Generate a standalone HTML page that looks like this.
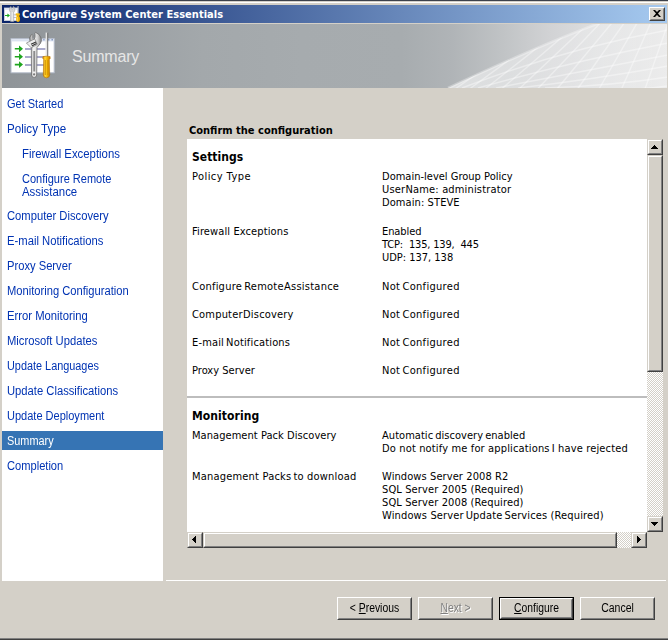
<!DOCTYPE html>
<html><head><meta charset="utf-8"><title>Configure System Center Essentials</title>
<style>
html,body{margin:0;padding:0;}
body{width:668px;height:640px;overflow:hidden;background:#d4d0c8;position:relative;font-family:"DejaVu Sans Condensed","DejaVu Sans","Liberation Sans",sans-serif;font-size:11px;color:#000;}
.abs{position:absolute;}
#topdark{left:0;top:0;width:668px;height:1px;background:#3c414b;}
#toplite{left:0;top:1px;width:668px;height:1px;background:#d4d0c8;}
#topwhite{left:0;top:2px;width:668px;height:1px;background:#fff;}
#leftlite{display:none;}
#botgray{left:0;top:638px;width:668px;height:1px;background:#808080;}
#botdark{left:0;top:639px;width:668px;height:1px;background:#404040;}
#titlebar{left:2px;top:5px;width:665px;height:18px;background:linear-gradient(to right,#0a246a 0%,#a6caf0 100%);}
#title{left:22px;top:8px;letter-spacing:.04px;height:13px;line-height:13px;font-weight:bold;font-size:11px;color:#fff;white-space:nowrap;}
#closebtn{left:649px;top:7px;width:16px;height:14px;background:#d4d0c8;box-sizing:border-box;border:1px solid;border-color:#fff #404040 #404040 #fff;}
#closebtn:before{content:"";position:absolute;left:0;top:0;right:0;bottom:0;border:1px solid;border-color:#d4d0c8 #808080 #808080 #d4d0c8;}
#banner{left:2px;top:24px;width:665px;height:64px;background:linear-gradient(to right,#8f9498 0px,#999ea2 100px,#a3a8ab 200px,#a6abae 300px,#a7acaf 400px,#b0b4b7 450px,#c0c3c5 500px,#d2d3d5 550px,#dfe0e1 600px,#e9e9e9 666px);overflow:hidden;}
#heading{left:72px;top:47px;letter-spacing:-.2px;font-family:"Liberation Sans",sans-serif;font-size:16px;line-height:20px;color:#e6e6e6;white-space:nowrap;}
#sidebar{left:2px;top:88px;width:161px;height:493px;background:#fff;}
.nav{position:absolute;left:5px;font-family:"Liberation Sans",sans-serif;font-size:12px;line-height:13px;color:#0033b3;white-space:nowrap;transform:scaleX(.92);transform-origin:0 0;}
.nav.sub{left:20px;}
#sel{left:0;top:343px;width:161px;height:19px;background:#3674b4;}
.nav.on{color:#fff;}
#sepline{left:166px;top:580px;width:500px;height:1px;background:#fff;}
#confirm{left:189px;top:124px;line-height:13px;font-weight:bold;white-space:nowrap;}
#panel{left:187px;top:139px;width:460px;height:393px;background:#fff;overflow:hidden;}
.h{position:absolute;left:5px;font-weight:bold;font-size:12px;line-height:15px;white-space:nowrap;}
.l{position:absolute;left:5px;line-height:13px;white-space:nowrap;}
.v{position:absolute;left:195px;line-height:13px;white-space:nowrap;}
.s0{word-spacing:-3px}.s1{word-spacing:-2px}.s2{word-spacing:-1.2px}
#rule{left:0;top:257px;width:460px;height:2px;background:#bdbdbd;}
.sbbtn{position:absolute;width:16px;height:16px;background:#d4d0c8;box-sizing:border-box;border:1px solid;border-color:#d4d0c8 #404040 #404040 #d4d0c8;}
.sbbtn:before{content:"";position:absolute;left:0;top:0;right:0;bottom:0;border:1px solid;border-color:#fff #808080 #808080 #fff;}
.track{position:absolute;background-color:#fff;background-image:conic-gradient(#d4d0c8 25%,#fff 0 50%,#d4d0c8 0 75%,#fff 0);background-size:2px 2px;}
.btn{position:absolute;top:597px;width:75px;height:23px;box-sizing:border-box;background:#d4d0c8;border:1px solid;border-color:#fff #404040 #404040 #fff;font-family:"Liberation Sans",sans-serif;font-size:12px;line-height:13px;text-align:center;color:#000;}
.btn:before{content:"";position:absolute;left:0;top:0;right:0;bottom:0;border:1px solid;border-color:#d4d0c8 #808080 #808080 #d4d0c8;}
.btn span{position:absolute;left:0;right:0;top:4px;display:block;transform:scaleX(.92);transform-origin:50% 0;white-space:nowrap;}
.btn.dis span{color:#808080;text-shadow:1px 1px 0 #fff;}
.btn.def{border-color:#000;}
.btn.def:before{border-color:#fff #404040 #404040 #fff;}
.btn.def:after{content:"";position:absolute;left:1px;top:1px;right:1px;bottom:1px;border:1px solid;border-color:#d4d0c8 #808080 #808080 #d4d0c8;}
u{text-decoration:underline;text-underline-offset:1px;}
</style></head>
<body>
<div class="abs" id="topdark"></div><div class="abs" id="toplite"></div><div class="abs" id="topwhite"></div><div class="abs" id="leftlite"></div>
<div class="abs" id="botgray"></div><div class="abs" id="botdark"></div>

<div class="abs" id="titlebar"></div>
<svg class="abs" id="ticon" style="left:4px;top:6px" width="16" height="16" viewBox="0 0 16 16">
 <rect x=".4" y="2" width="13.300" height="12.600" fill="#fff" stroke="#d3d8e2" stroke-width=".8"/>
 <rect x=".8" y="2.400" width="12.500" height="1.300" fill="#d9e2f3"/>
 <path d="M7.500 8.800h4.500M7.500 11.500h4.500" stroke="#b9bbdc" stroke-width="1"/>
 <path d="M1 8.900H3.400V7.400L6 9.500 3.400 11.600V10.100H1z" fill="#1caa1c"/>
 <path d="M6.600 15.600 L6.700 6.400 Q5 5 5.600 2.600 Q5.900 1 7 .4 L7.300 2.700 L8.200 3.500 L9.100 2.700 L9.400 .2 Q10.600 1 10.800 2.600 Q11.200 5 9.700 6.400 L9.800 15.600 Z" fill="#d4d4d4" stroke="#9c9c9c" stroke-width=".5"/>
 <rect x="7.700" y="6" width="1" height="9.200" fill="#f4f4f4"/>
 <rect x="13.600" y="0" width=".9" height="7.600" fill="#dcdcdc"/>
 <path d="M11.700 7.400H15.900V9.400H15V10.300Q15.900 10.600 15.900 11.800V14.300Q15.700 15.900 14 15.900Q12.300 15.900 12.200 14.300V11.800Q12.200 10.600 12.700 10.300V9.400H11.700z" fill="#f2b300"/>
 <path d="M12.300 7.900H15.300" stroke="#ffd84a" stroke-width=".8"/>
 <path d="M13.400 11V15" stroke="#ffd84a" stroke-width=".9"/>
</svg>
<div class="abs" id="title">Configure System Center Essentials</div>
<div class="abs" id="closebtn"><svg class="abs" style="left:3px;top:2px" width="8" height="7" viewBox="0 0 8 7"><path d="M0 0h2l2 2 2-2h2L5 3.500 8 7H6L4 5 2 7H0L3 3.500z" fill="#000"/></svg></div>

<div class="abs" id="banner">
<svg class="abs" style="left:0;top:0" width="666" height="64" viewBox="2 24 666 64">
 <defs>
  <linearGradient id="surf" gradientUnits="userSpaceOnUse" x1="448" y1="0" x2="668" y2="0"><stop offset="0" stop-color="#fff" stop-opacity=".6"/><stop offset=".5" stop-color="#fff" stop-opacity=".3"/><stop offset="1" stop-color="#fff" stop-opacity=".12"/></linearGradient>
  <filter id="soft" x="-5%" y="-5%" width="110%" height="110%"><feGaussianBlur stdDeviation=".45"/></filter>
  <clipPath id="surfclip"><path d="M448,88 Q540,45 602,22 L668,22 L668,90 L448,90 Z"/></clipPath>
 </defs>
 <path d="M448,88 Q540,45 602,22 L668,22 L668,90 L448,90 Z" fill="url(#surf)"/>
<g fill="none" stroke="#fff" stroke-width="1.4" stroke-opacity=".38" clip-path="url(#surfclip)" filter="url(#soft)">
<path d="M462,88 Q560,50 668,30"/>
<path d="M478,88 Q570,62 668,43"/>
<path d="M496,88 Q580,72 668,55"/>
<path d="M518,88 Q590,80 668,66"/>
<path d="M545,88 Q610,86 668,77"/>
<path d="M600,90 Q640,90 668,86"/>
<path d="M455.0,89 L556.5,19"/>
<path d="M469.5,89 L564.8,19"/>
<path d="M485.0,89 L573.8,19"/>
<path d="M501.5,89 L583.3,19"/>
<path d="M519.0,89 L593.3,19"/>
<path d="M537.5,89 L604.0,19"/>
<path d="M557.0,89 L615.2,19"/>
<path d="M577.5,89 L627.0,19"/>
<path d="M599.0,89 L639.4,19"/>
<path d="M621.5,89 L652.4,19"/>
<path d="M645.0,89 L669.5,19"/>
<path d="M669.5,89 L694.0,19"/>
</g>
<path d="M448,88 Q540,45 602,22" fill="none" stroke="#fff" stroke-opacity=".3" stroke-width="2.5" filter="url(#soft)"/>

</svg>
<svg class="abs" id="bigicon" style="left:2px;top:2px" width="60" height="60" viewBox="0 0 60 60">
 <defs>
  <linearGradient id="wr" x1="0" y1="0" x2="1" y2="0"><stop offset="0" stop-color="#8e8e8e"/><stop offset=".35" stop-color="#f6f6f6"/><stop offset=".7" stop-color="#cfcfcf"/><stop offset="1" stop-color="#7c7c7c"/></linearGradient>
  <linearGradient id="hd" x1="0" y1="0" x2="1" y2="0"><stop offset="0" stop-color="#d88a00"/><stop offset=".3" stop-color="#ffd83a"/><stop offset=".6" stop-color="#f4b400"/><stop offset="1" stop-color="#c87c00"/></linearGradient>
 </defs>
 <rect x="6.600" y="12.400" width="44" height="36" fill="#8a9096" opacity=".45"/>
 <rect x="7" y="12.600" width="43.200" height="34.200" fill="#fff" stroke="#b4bccb" stroke-width="1"/>
 <rect x="7.500" y="13.100" width="42.200" height="2.300" fill="#dbe2f0"/>
 <rect x="39.300" y="13.300" width="1.200" height="1" fill="#5570a8"/><rect x="44.200" y="13.300" width="1.200" height="1" fill="#5570a8"/><rect x="47.500" y="13.300" width="1.400" height="1" fill="#5570a8"/>
 <g stroke="#8e8ebc" stroke-width="1.700"><path d="M21 23H41.500M21 31H41.500M21 39H41.500"/></g>
 <g fill="#1fa51f"><path d="M10.800 22H15V19.400L19 22.800 15 26.200V23.600H10.800z"/><path d="M10.800 29.900H15V27.300L19 30.700 15 34.100V31.500H10.800z"/><path d="M10.800 37.800H15V35.200L19 38.600 15 42V39.400H10.800z"/></g>
 <!-- wrench -->
 <path d="M27.300 21.500 L27.500 49 Q27.700 51.400 30.100 51.400 Q32.500 51.400 32.700 49 L33 21.500 L36.400 17.400 Q38 14.600 37.200 12.200 Q35.800 7.800 31.600 6.400 Q30.400 6.600 31 8.600 Q31.400 11 30.200 13.400 L29.300 14 Q28.400 12 28.800 9 Q28.600 7.800 27.200 8.800 Q24.600 11.600 26 15 L27.300 17 Z" fill="url(#wr)" stroke="#6e6e6e" stroke-width=".8" stroke-linejoin="round"/>
 <path d="M22.400 17 L30.600 12.900 L33.300 18.400 L27.200 21.800 Z" fill="#ededed" stroke="#7a7a7a" stroke-width=".7" stroke-linejoin="round"/>
 <path d="M27 18.300 L32 15.900 M27.800 20 L32.600 17.600" stroke="#333" stroke-width="1.100" fill="none"/>
 <rect x="29.300" y="25" width="1.900" height="20.500" fill="#8c8c8c"/>
 <circle cx="30.100" cy="48.400" r="1.100" fill="#7a7a7a"/>
 <!-- screwdriver -->
 <rect x="41.600" y="6.600" width="2.200" height="24" fill="#e4e4e4"/>
 <rect x="43.300" y="6.600" width=".9" height="24" fill="#5c5c5c"/>
 <path d="M38.900 30.600 Q42.500 29.800 46.100 30.600 L46.100 32.800 L45.300 33.600 L45.700 49 Q45.500 51.700 42.500 51.800 Q39.500 51.700 39.300 49 L39.700 33.600 L38.900 32.800 Z" fill="url(#hd)" stroke="#b87400" stroke-width=".6"/>
 <path d="M41.300 34V49M43.900 34V49" stroke="#c88600" stroke-width=".8" fill="none"/>
</svg>
</div>
<div class="abs" id="heading">Summary</div>

<div class="abs" id="sidebar">
 <div class="abs" id="sel"></div>
 <div class="nav" id="n0" style="top:10px;transform:scaleX(0.9166)">Get Started</div>
 <div class="nav" id="n1" style="top:35px;transform:scaleX(0.9665)">Policy Type</div>
 <div class="nav sub" id="n2" style="top:60px;transform:scaleX(0.9472)">Firewall Exceptions</div>
 <div class="nav sub" id="n3" style="top:85px;transform:scaleX(0.9180)">Configure Remote</div>
 <div class="nav sub" id="n4" style="top:98px;transform:scaleX(0.9516)">Assistance</div>
 <div class="nav" id="n5" style="top:122px;transform:scaleX(0.9348)">Computer Discovery</div>
 <div class="nav" id="n6" style="top:147px;transform:scaleX(0.9377)">E-mail Notifications</div>
 <div class="nav" id="n7" style="top:172px;transform:scaleX(0.9316)">Proxy Server</div>
 <div class="nav" id="n8" style="top:197px;transform:scaleX(0.9307)">Monitoring Configuration</div>
 <div class="nav" id="n9" style="top:222px;transform:scaleX(0.9387)">Error Monitoring</div>
 <div class="nav" id="n10" style="top:247px;transform:scaleX(0.9346)">Microsoft Updates</div>
 <div class="nav" id="n11" style="top:272px;transform:scaleX(0.9061)">Update Languages</div>
 <div class="nav" id="n12" style="top:297px;transform:scaleX(0.9352)">Update Classifications</div>
 <div class="nav" id="n13" style="top:322px;transform:scaleX(0.9181)">Update Deployment</div>
 <div class="nav on" id="n14" style="top:347px;transform:scaleX(0.9084)">Summary</div>
 <div class="nav" id="n15" style="top:372px;transform:scaleX(0.9266)">Completion</div>
</div>
<div class="abs" id="sepline"></div>

<div class="abs" id="confirm">Confirm the configuration</div>
<div class="abs" id="panel">
 <div class="h" id="p0" style="top:11px;letter-spacing:0.025px">Settings</div>
 <div class="l" id="p1" style="top:31px;letter-spacing:0.436px">Policy Type</div>
 <div class="v" id="p2" style="top:31px;letter-spacing:0.008px">Domain-level Group Policy</div>
 <div class="v" id="p3" style="top:44px;letter-spacing:0.159px">User<span class="s0"> </span>Name: administrator</div>
 <div class="v" id="p4" style="top:57px;letter-spacing:0.092px">Domain: STEVE</div>
 <div class="l" id="p5" style="top:86px;letter-spacing:0.116px">Firewall Exceptions</div>
 <div class="v" id="p6" style="top:86px;letter-spacing:-0.086px">Enabled</div>
 <div class="v" id="p7" style="top:99px;letter-spacing:-0.170px">TCP:  135, 139,  445</div>
 <div class="v" id="p8" style="top:112px;letter-spacing:-0.016px">UDP: 137, 138</div>
 <div class="l" id="p9" style="top:141px;letter-spacing:0.230px">Configure<span class="s2"> </span>Remote<span class="s0"> </span>Assistance</div>
 <div class="v" id="p10" style="top:141px;letter-spacing:0.300px">Not<span class="s2"> </span>Configured</div>
 <div class="l" id="p11" style="top:169px;letter-spacing:0.189px">Computer<span class="s0"> </span>Discovery</div>
 <div class="v" id="p12" style="top:169px;letter-spacing:0.300px">Not<span class="s2"> </span>Configured</div>
 <div class="l" id="p13" style="top:197px;letter-spacing:0.160px">E-mail<span class="s2"> </span>Notifications</div>
 <div class="v" id="p14" style="top:197px;letter-spacing:0.300px">Not<span class="s2"> </span>Configured</div>
 <div class="l" id="p15" style="top:225px;letter-spacing:0.017px">Proxy Server</div>
 <div class="v" id="p16" style="top:225px;letter-spacing:0.300px">Not<span class="s2"> </span>Configured</div>
 <div class="abs" id="rule"></div>
 <div class="h" id="p17" style="top:270px;letter-spacing:0.080px">Monitoring</div>
 <div class="l" id="p18" style="top:290px;letter-spacing:0.056px">Management Pack Discovery</div>
 <div class="v" id="p19" style="top:290px;letter-spacing:0.045px">Automatic<span class="s2"> </span>discovery<span class="s2"> </span>enabled</div>
 <div class="v" id="p20" style="top:303px;letter-spacing:0.147px">Do not notify me for applications<span class="s2"> </span>I have rejected</div>
 <div class="l" id="p21" style="top:331px;letter-spacing:0.193px">Management Packs<span class="s2"> </span>to download</div>
 <div class="v" id="p22" style="top:331px;letter-spacing:0.091px">Windows Server 2008 R2</div>
 <div class="v" id="p23" style="top:344px;letter-spacing:0.123px">SQL Server 2005 (Required)</div>
 <div class="v" id="p24" style="top:357px;letter-spacing:0.123px">SQL Server 2008 (Required)</div>
 <div class="v" id="p25" style="top:370px;letter-spacing:0.136px">Windows Server<span class="s2"> </span>Update<span class="s2"> </span>Services (Required)</div>
</div>

<!-- vertical scrollbar -->
<div class="track" style="left:647px;top:155px;width:16px;height:361px"></div>
<div class="sbbtn" style="left:647px;top:139px"><svg class="abs" style="left:3px;top:5px" width="7" height="4" viewBox="0 0 7 4" shape-rendering="crispEdges"><path d="M3 0h1v1h1v1h1v1h1v1H0V3h1V2h1V1h1z" fill="#000"/></svg></div>
<div class="sbbtn" style="left:647px;top:155px;height:217px"></div>
<div class="sbbtn" style="left:647px;top:516px"><svg class="abs" style="left:3px;top:5px" width="7" height="4" viewBox="0 0 7 4" shape-rendering="crispEdges"><path d="M0 0h7v1H6v1H5v1H4v1H3V3H2V2H1V1H0z" fill="#000"/></svg></div>
<!-- horizontal scrollbar -->
<div class="track" style="left:203px;top:532px;width:428px;height:16px"></div>
<div class="sbbtn" style="left:187px;top:532px"><svg class="abs" style="left:4px;top:3px" width="4" height="7" viewBox="0 0 4 7" shape-rendering="crispEdges"><path d="M3 0h1v7H3V6H2V5H1V4H0V3h1V2h1V1h1z" fill="#000"/></svg></div>
<div class="sbbtn" style="left:203px;top:532px;width:414px"></div>
<div class="sbbtn" style="left:631px;top:532px"><svg class="abs" style="left:5px;top:3px" width="4" height="7" viewBox="0 0 4 7" shape-rendering="crispEdges"><path d="M0 0h1v1h1v1h1v1h1v1H3v1H2v1H1v1H0z" fill="#000"/></svg></div>

<div class="btn" style="left:337px"><span style="transform:scaleX(.865)">&lt; <u>P</u>revious</span></div>
<div class="btn dis" style="left:418px"><span style="transform:scaleX(.86)"><u>N</u>ext &gt;</span></div>
<div class="btn def" style="left:499px"><span style="transform:scaleX(.86)"><u>C</u>onfigure</span></div>
<div class="btn" style="left:580px"><span style="transform:scaleX(.875)">Cancel</span></div>
</body></html>
